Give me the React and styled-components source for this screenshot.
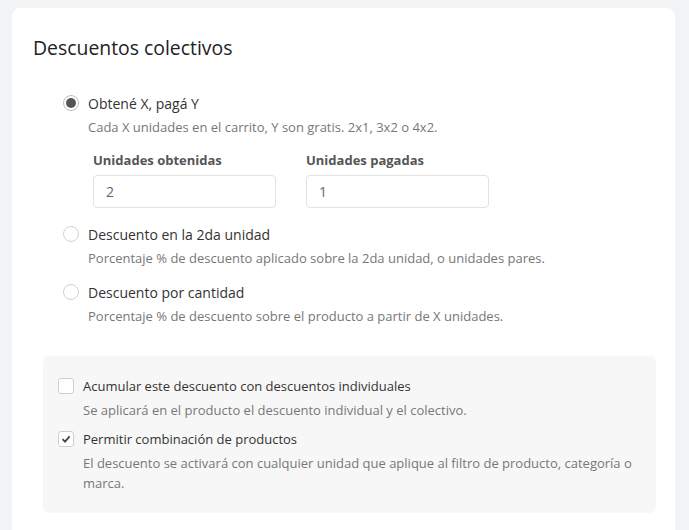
import styled, { createGlobalStyle } from 'styled-components';

const GlobalStyle = createGlobalStyle`
  body {
    margin: 0;
    background: #f2f3f5;
    font-family: 'Open Sans', 'Liberation Sans', sans-serif;
    color: #333;
  }
`;

const options = [
  {
    id: 'xy',
    label: 'Obtené X, pagá Y',
    desc: 'Cada X unidades en el carrito, Y son gratis. 2x1, 3x2 o 4x2.',
    checked: true,
  },
  {
    id: 'second',
    label: 'Descuento en la 2da unidad',
    desc: 'Porcentaje % de descuento aplicado sobre la 2da unidad, o unidades pares.',
  },
  {
    id: 'qty',
    label: 'Descuento por cantidad',
    desc: 'Porcentaje % de descuento sobre el producto a partir de X unidades.',
  },
];

const extras = [
  {
    id: 'acc',
    label: 'Acumular este descuento con descuentos individuales',
    desc: 'Se aplicará en el producto el descuento individual y el colectivo.',
  },
  {
    id: 'comb',
    label: 'Permitir combinación de productos',
    desc: 'El descuento se activará con cualquier unidad que aplique al filtro de producto, categoría o marca.',
    checked: true,
  },
];

const App = () => {
  return (
    <>
      <GlobalStyle />
      <Card>
        <Title>Descuentos colectivos</Title>
        <RadioList>
          {options.map(opt => (
            <Option key={opt.id}>
              <OptionRow>
                <Radio checked={opt.checked} />
                <OptionLabel>{opt.label}</OptionLabel>
              </OptionRow>
              <Desc>{opt.desc}</Desc>
              {opt.checked && (
                <Fields>
                  <Field>
                    <FieldLabel>Unidades obtenidas</FieldLabel>
                    <Input defaultValue="2" />
                  </Field>
                  <Field>
                    <FieldLabel>Unidades pagadas</FieldLabel>
                    <Input defaultValue="1" />
                  </Field>
                </Fields>
              )}
            </Option>
          ))}
        </RadioList>
        <ExtraBox>
          {extras.map(ex => (
            <Option key={ex.id}>
              <OptionRow>
                <Checkbox checked={ex.checked}>
                  {ex.checked && (
                    <svg width="10" height="10" viewBox="0 0 10 10">
                      <path d="M1.5 5.2 L4 7.6 L8.6 2.4" fill="none" stroke="#444" strokeWidth="1.8" />
                    </svg>
                  )}
                </Checkbox>
                <OptionLabel small>{ex.label}</OptionLabel>
              </OptionRow>
              <Desc>{ex.desc}</Desc>
            </Option>
          ))}
        </ExtraBox>
      </Card>
    </>
  );
};

const Card = styled.div`
  margin: 8px 14px 0 12px;
  background: #fff;
  border-radius: 8px 8px 0 0;
  padding: 26px 19px 40px 21px;
  min-height: 500px;
`;

const Title = styled.h2`
  margin: 0;
  font-size: 19.4px;
  line-height: 28px;
  font-weight: 400;
  color: #222;
`;

const RadioList = styled.div`
  display: flex;
  flex-direction: column;
  gap: 14px;
  margin-top: 31px;
  padding-left: 30px;
`;

const Option = styled.div`
  display: flex;
  flex-direction: column;
`;

const OptionRow = styled.label`
  display: flex;
  align-items: center;
  gap: 9px;
  height: 20px;
`;

const Radio = styled.span`
  box-sizing: border-box;
  width: 16px;
  height: 16px;
  border-radius: 50%;
  border: 1px solid ${props => (props.checked ? '#bdbdbd' : '#d2d2d2')};
  background: #fff;
  flex-shrink: 0;
  position: relative;

  &::after {
    content: '';
    display: ${props => (props.checked ? 'block' : 'none')};
    position: absolute;
    inset: 2px;
    border-radius: 50%;
    background: #555;
  }
`;

const Checkbox = styled.span`
  box-sizing: border-box;
  width: 16px;
  height: 16px;
  border-radius: 3px;
  border: 1px solid #cfcfcf;
  background: #fff;
  flex-shrink: 0;
  display: flex;
  align-items: center;
  justify-content: center;
`;

const OptionLabel = styled.span`
  font-size: ${props => (props.small ? '13px' : '14px')};
  color: #333;
`;

const Desc = styled.p`
  margin: 4px 0 0;
  padding-left: 25px;
  font-size: 13px;
  line-height: 20px;
  color: #777;
`;

const Fields = styled.div`
  display: flex;
  gap: 30px;
  margin: 13px 0 2px;
  padding-left: 30px;
`;

const Field = styled.div`
  display: flex;
  flex-direction: column;
  gap: 5px;
`;

const FieldLabel = styled.span`
  font-size: 13px;
  line-height: 20px;
  font-weight: 700;
  color: #555;
`;

const Input = styled.input`
  box-sizing: border-box;
  width: 183px;
  height: 33px;
  border: 1px solid #e2e2e2;
  border-radius: 4px;
  padding: 0 12px;
  font-family: inherit;
  font-size: 14px;
  color: #666;
  outline: none;
`;

const ExtraBox = styled.div`
  display: flex;
  flex-direction: column;
  gap: 9px;
  margin: 30px 0 0 10px;
  padding: 20px 20px 20px 15px;
  background: #f7f7f8;
  border-radius: 6px;
`;

export default App;
